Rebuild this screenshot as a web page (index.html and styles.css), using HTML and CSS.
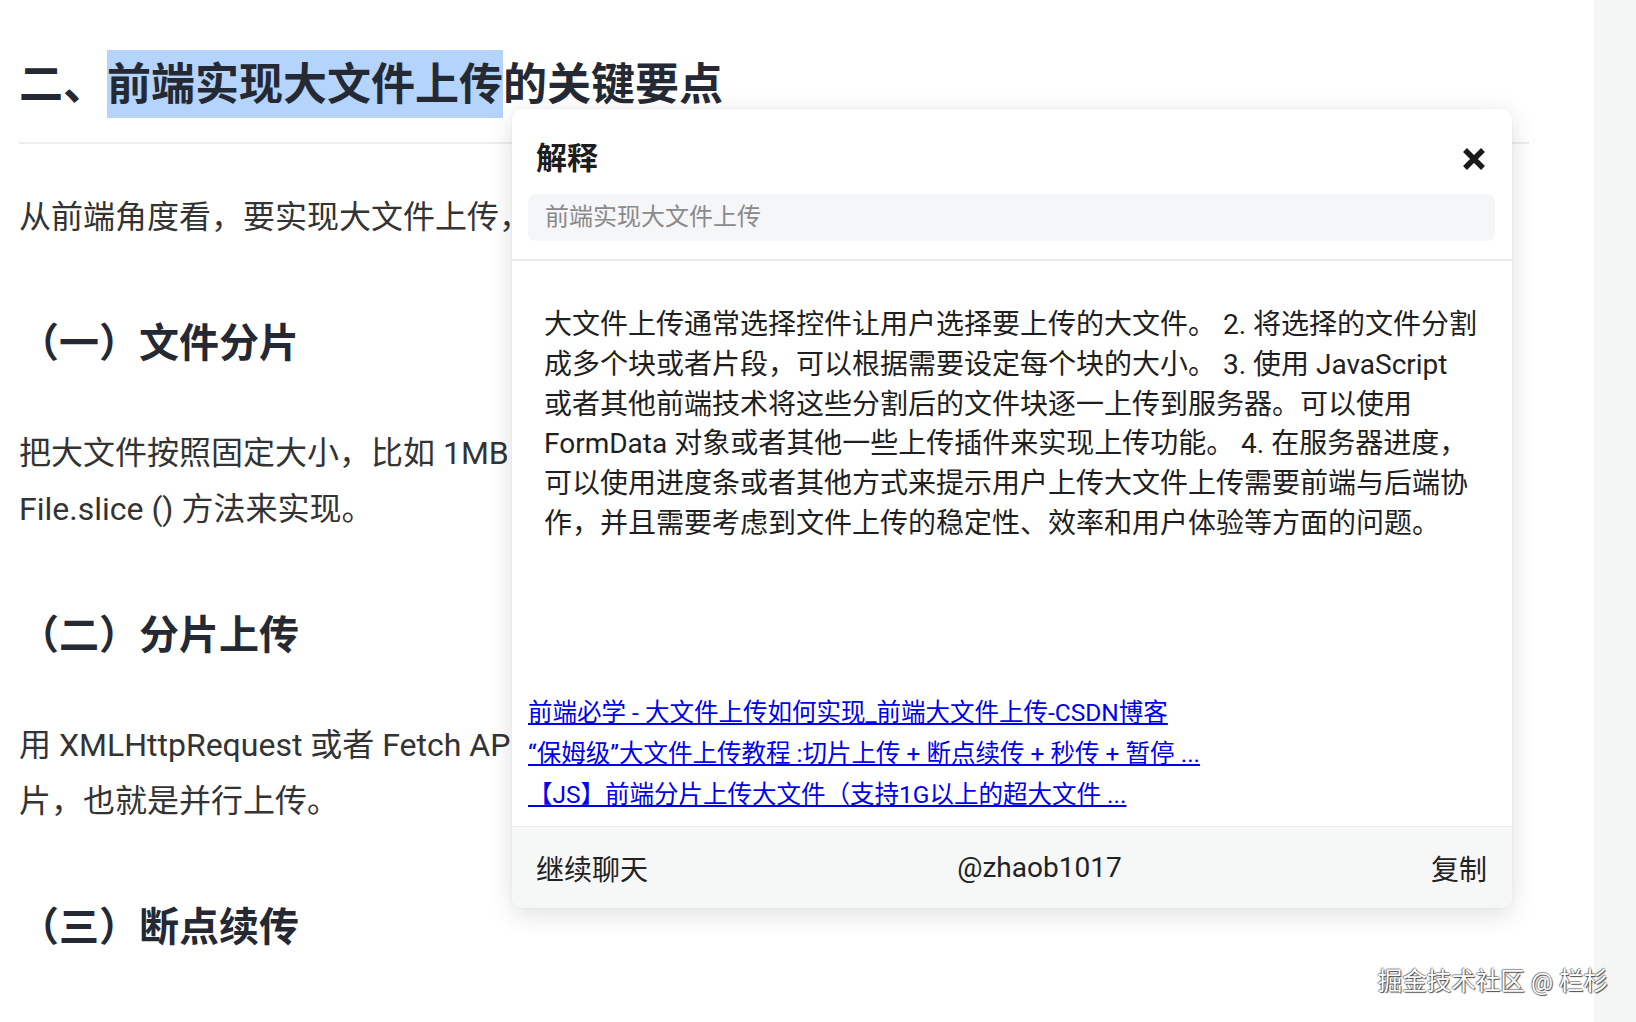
FILE: index.html
```html
<!DOCTYPE html>
<html lang="zh-CN">

<head>
    <meta charset="UTF-8">
    <meta name="viewport" content="width=device-width, initial-scale=1.0">
    <title>前端实现大文件上传</title>
    <link rel="stylesheet" href="styles.css">
</head>

<body>
    <div class="page">
        <div class="article">
            <h2>二、<span class="hl">前端实现大文件上传</span>的关键要点</h2>
            <p>从前端角度看，要实现大文件上传，需要考虑以下几个关键要点：</p>

            <h3>（一）文件分片</h3>
            <p>把大文件按照固定大小，比如 1MB 或者 5MB，切割成多个小块，可以使用<br>File.slice () 方法来实现。</p>

            <h3>（二）分片上传</h3>
            <p>用 XMLHttpRequest 或者 Fetch API 将文件块发送到服务器，可以同时上传多个分<br>片，也就是并行上传。</p>

            <h3>（三）断点续传</h3>
            <p class="last">在上传过程中记录已上传的分片信息，如果上传中断，下次可以从断点处继续上传。</p>
        </div>
        <div class="aside"></div>

        <!-- 划词解释弹窗 -->
        <div class="popup">
            <div class="popup-head">
                <span class="popup-title">解释</span>
                <svg class="close" width="24" height="24" viewBox="0 0 24 24">
                    <path d="M3 3 L21 21 M21 3 L3 21" stroke="#1a1a1a" stroke-width="5.5" />
                </svg>
            </div>
            <div class="popup-input">前端实现大文件上传</div>
            <div class="popup-body">
                大文件上传通常选择控件让用户选择要上传的大文件。 2. 将选择的文件分割成多个块或者片段，可以根据需要设定每个块的大小。 3. 使用 JavaScript
                或者其他前端技术将这些分割后的文件块逐一上传到服务器。可以使用 FormData 对象或者其他一些上传插件来实现上传功能。 4. 在服务器进度，可以使用进度条或者其他方式来提示用户上传大文件上传需要前端与后端协作，并且需要考虑到文件上传的稳定性、效率和用户体验等方面的问题。
            </div>
            <div class="popup-links">
                <a href="javascript:;">前端必学 - 大文件上传如何实现_前端大文件上传-CSDN博客</a>
                <a href="javascript:;">“保姆级”大文件上传教程 :切片上传 + 断点续传 + 秒传 + 暂停 ...</a>
                <a href="javascript:;">【JS】前端分片上传大文件（支持1G以上的超大文件 ...</a>
            </div>
            <div class="popup-foot">
                <span>继续聊天</span>
                <span>@zhaob1017</span>
                <span>复制</span>
            </div>
        </div>

        <div class="watermark">掘金技术社区 @ 栏杉</div>
    </div>
</body>

</html>
```

FILE: styles.css
```css
html,
body {
    margin: 0;
    padding: 0;
    height: 100%;
}

body {
    font-family: Roboto, "Noto Sans CJK SC", sans-serif;
    color: #333;
    background: #fff;
    overflow: hidden;
}

.page {
    position: relative;
    display: flex;
    height: 1022px;
    overflow: hidden;
}

.article {
    width: 1510px;
    padding: 0 65px 0 19px;
    flex-shrink: 0;
}

.aside {
    flex: 1;
    background: #f4f5f5;
}

.article h2 {
    margin: 52px 0 0;
    padding-bottom: 23px;
    border-bottom: 2px solid #ededed;
    font-size: 44px;
    line-height: 67px;
    font-weight: 700;
    color: #252933;
}

.hl {
    background: #b4d4fb;
    padding: 9px 0 7px;
}

.article h3 {
    margin: 69px 0 0;
    font-size: 40px;
    line-height: 60px;
    font-weight: 700;
    color: #252933;
}

.article p {
    margin: 51px 0 0;
    font-size: 32px;
    line-height: 56px;
    color: #333;
}

.article h2 + p {
    margin-top: 45px;
}

.article p.last {
    margin-top: 54px;
}

/* 弹窗 */
.popup {
    position: absolute;
    left: 512px;
    top: 109px;
    width: 1000px;
    height: 799px;
    background: #fff;
    border-radius: 10px;
    box-shadow: 0 6px 26px rgba(0, 0, 0, .13), 0 0 3px rgba(0, 0, 0, .05);
    display: flex;
    flex-direction: column;
    overflow: hidden;
}

.popup-head {
    display: flex;
    justify-content: space-between;
    align-items: center;
    padding: 24px 26px 0 24px;
    height: 44px;
}

.popup-title {
    font-size: 31px;
    font-weight: 700;
    color: #1d1d1d;
}

.close {
    margin-top: 8px;
}

.popup-input {
    margin: 17px 17px 0 16px;
    height: 47px;
    line-height: 47px;
    padding: 0 17px;
    background: #f5f6f7;
    border-radius: 8px;
    font-size: 24px;
    color: #8a8a8a;
}

.popup-body {
    margin-top: 18px;
    border-top: 2px solid #ececec;
    padding: 44px 32px 0 32px;
    flex: 1;
    font-size: 28px;
    line-height: 39.8px;
    color: #1f1f1f;
}

.popup-links {
    display: flex;
    flex-direction: column;
    align-items: flex-start;
    padding: 0 24px 11px 16px;
}

.popup-links a {
    font-size: 24.5px;
    line-height: 41px;
    color: #0000ee;
    text-decoration: underline;
}

.popup-foot {
    height: 81px;
    display: flex;
    justify-content: space-between;
    align-items: center;
    padding: 0 25px 0 24px;
    background: #f6f7f7;
    border-top: 1px solid #eee;
    font-size: 28px;
    color: #222;
}

.watermark {
    position: absolute;
    right: 28px;
    top: 964px;
    font-size: 24.5px;
    line-height: 36px;
    color: #fff;
    text-shadow: 1px 1px 1px rgba(0, 0, 0, .7), -1px 0 1px rgba(0, 0, 0, .45), 0 -1px 1px rgba(0, 0, 0, .4);
}
```
